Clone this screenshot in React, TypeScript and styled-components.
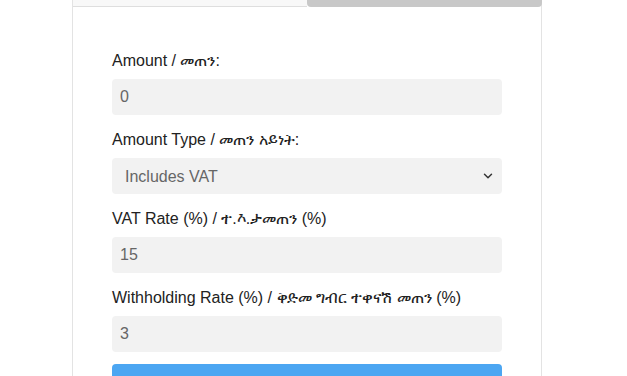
import React, { useState } from 'react'
import styled, { createGlobalStyle } from 'styled-components'
import { ChevronDown } from 'lucide-react'

const GlobalStyle = createGlobalStyle`
  html, body {
    margin: 0;
    padding: 0;
    background: #fff;
    font-family: "Liberation Sans", Arial, "DejaVu Sans", "Noto Sans", sans-serif;
  }
`

const Page = styled.div`
  display: flex;
  padding-left: 72px;
`

const Card = styled.div`
  width: 470px;
  box-sizing: border-box;
  border: 1px solid #e3e3e3;
  border-top: none;
  background: #fff;
`

const TabBar = styled.div`
  display: grid;
  grid-template-columns: 1fr 1fr;
  height: 7px;
`

const Tab = styled.div<{ $active?: boolean }>`
  height: 7px;
  box-sizing: border-box;
  background: ${p => p.$active ? '#c8c8c8' : '#f8f8f8'};
  border-bottom: ${p => p.$active ? 'none' : '1px solid #dedede'};
  border-radius: ${p => p.$active ? '0 0 4px 4px' : '0'};
  margin-right: ${p => p.$active ? '-1px' : '0'};
`

const Form = styled.form`
  display: flex;
  flex-direction: column;
  gap: 16px;
  padding: 45px 39px 30px;
`

const Field = styled.div`
  display: flex;
  flex-direction: column;
`

const Label = styled.label`
  display: block;
  font-size: 16px;
  line-height: 18px;
  color: #222;
  margin-bottom: 9px;
`

const Input = styled.input`
  height: 36px;
  box-sizing: border-box;
  border: none;
  border-radius: 4px;
  background: #f2f2f2;
  padding: 0 8px;
  font-family: inherit;
  font-size: 16px;
  color: #666;
  outline: none;
`

const SelectWrap = styled.div`
  position: relative;
`

const Select = styled.select`
  width: 100%;
  height: 36px;
  box-sizing: border-box;
  appearance: none;
  border: none;
  border-radius: 4px;
  background: #f2f2f2;
  padding: 0 13px;
  font-family: inherit;
  font-size: 16px;
  color: #666;
  outline: none;
`

const Arrow = styled(ChevronDown)`
  position: absolute;
  right: 7px;
  top: 11px;
  pointer-events: none;
  color: #333;
`

const Button = styled.button`
  height: 46px;
  margin-top: -4px;
  border: none;
  border-radius: 4px;
  background: #4ca6f2;
  color: #fff;
  font-family: inherit;
  font-size: 16px;
`

export default function App() {
  const [amount, setAmount] = useState('0')
  const [type, setType] = useState('inc')
  const [vat, setVat] = useState('15')
  const [wht, setWht] = useState('3')

  return <>
    <GlobalStyle />
    <Page>
      <Card>
        <TabBar>
          <Tab />
          <Tab $active />
        </TabBar>
        <Form onSubmit={e => e.preventDefault()}>
          <Field>
            <Label>Amount / መጠን:</Label>
            <Input value={amount} onChange={e => setAmount(e.target.value)} />
          </Field>
          <Field>
            <Label>Amount Type / መጠን አይነት:</Label>
            <SelectWrap>
              <Select value={type} onChange={e => setType(e.target.value)}>
                <option value='inc'>Includes VAT</option>
                <option value='exc'>Excludes VAT</option>
              </Select>
              <Arrow size={14} strokeWidth={2.5} />
            </SelectWrap>
          </Field>
          <Field>
            <Label>VAT Rate (%) / ተ.እ.ታመጠን (%)</Label>
            <Input value={vat} onChange={e => setVat(e.target.value)} />
          </Field>
          <Field>
            <Label>Withholding Rate (%) / ቅድመ ግብር ተቀናሽ መጠን (%)</Label>
            <Input value={wht} onChange={e => setWht(e.target.value)} />
          </Field>
          <Button type='submit'>Calculate / አስላ</Button>
        </Form>
      </Card>
    </Page>
  </>
}
